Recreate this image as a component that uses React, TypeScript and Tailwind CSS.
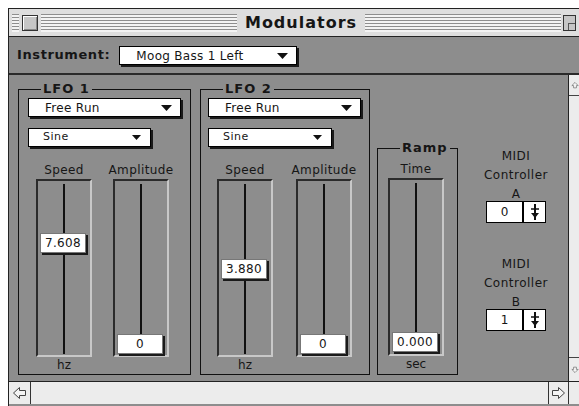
import React from "react";

const Tri = ({ small }: { small?: boolean }) =>
  small ? (
    <svg width="9" height="5" viewBox="0 0 9 5">
      <polygon points="0,0 9,0 4.5,5" fill="#111" />
    </svg>
  ) : (
    <svg width="11" height="6" viewBox="0 0 11 6">
      <polygon points="0,0 11,0 5.5,6" fill="#111" />
    </svg>
  );

const Popup = ({
  label,
  small,
  className,
}: {
  label: string;
  small?: boolean;
  className: string;
}) => (
  <div
    className={`flex items-center justify-between bg-white border border-black shadow-[2px_2px_0_#1a1a1a] ${className}`}
  >
    <span
      className={
        small
          ? "pl-[14px] text-[11px] tracking-[0.5px]"
          : "pl-[16px] text-[12px] tracking-[0.3px]"
      }
    >
      {label}
    </span>
    <span className={small ? "pr-[9px] flex" : "pr-[8px] flex"}>
      <Tri small={small} />
    </span>
  </div>
);

const Slider = ({ value, thumb }: { value: string; thumb: string }) => (
  <div className="relative h-[178px] w-[56px] border-2 border-t-[#2b2b2b] border-l-[#2b2b2b] border-b-[#c8c8c8] border-r-[#c8c8c8]">
    <div className="absolute left-[25px] top-[3px] bottom-[1px] w-[2px] bg-[#111]" />
    <div
      className={`absolute left-[2px] right-[4px] h-[20px] bg-white border border-[#777] shadow-[2px_2px_0_#1a1a1a] flex items-center justify-center text-[12px] tracking-[0.3px] ${thumb}`}
    >
      {value}
    </div>
  </div>
);

const SliderCol = ({
  label,
  unit,
  value,
  thumb,
}: {
  label: string;
  unit: string;
  value: string;
  thumb: string;
}) => (
  <div className="flex flex-col items-center w-[56px]">
    <div className="h-[17px] leading-[17px] text-[12px] tracking-[0.4px] whitespace-nowrap">
      {label}
    </div>
    <Slider value={value} thumb={thumb} />
    <div className="h-[16px] leading-[16px] text-[12px]">{unit}</div>
  </div>
);

const Group = ({
  title,
  className,
  children,
}: {
  title: string;
  className: string;
  children: React.ReactNode;
}) => (
  <div className={`relative border border-[#111] ${className}`}>
    <div className="absolute -top-[9px] left-[22px] px-[2px] bg-[#8d8d8d] text-[13px] font-bold leading-[16px] tracking-[1px]">
      {title}
    </div>
    {children}
  </div>
);

const StepIcon = () => (
  <svg width="12" height="18" viewBox="0 0 12 18">
    <line x1="6" y1="1" x2="6" y2="17" stroke="#111" strokeWidth="2" />
    <line x1="2" y1="6" x2="10" y2="6" stroke="#111" strokeWidth="1.5" />
    <polygon points="2,10 10,10 6,15" fill="#111" />
  </svg>
);

const Midi = ({
  letter,
  value,
  className,
}: {
  letter: string;
  value: string;
  className: string;
}) => (
  <div className={`flex flex-col items-center w-[60px] ${className}`}>
    <div className="h-[54px] text-center text-[12px] leading-[19px] tracking-[0.5px] whitespace-nowrap">
      MIDI
      <br />
      Controller
      <br />
      {letter}
    </div>
    <div className="flex h-[22px] w-[60px] border border-black bg-white">
      <div className="flex-1 flex items-center justify-center text-[12px]">
        {value}
      </div>
      <div className="w-[23px] border-l-2 border-black flex items-center justify-center">
        <StepIcon />
      </div>
    </div>
  </div>
);

const ArrowLeft = () => (
  <svg width="15" height="14" viewBox="0 0 15 14">
    <polygon
      points="1.5,7 7.5,1.5 7.5,4.5 13.5,4.5 13.5,9.5 7.5,9.5 7.5,12.5"
      fill="#f4f4f4"
      stroke="#444"
      strokeWidth="1"
    />
  </svg>
);

const ArrowRight = () => (
  <svg width="15" height="14" viewBox="0 0 15 14">
    <polygon
      points="13.5,7 7.5,1.5 7.5,4.5 1.5,4.5 1.5,9.5 7.5,9.5 7.5,12.5"
      fill="#f4f4f4"
      stroke="#444"
      strokeWidth="1"
    />
  </svg>
);

const Stripes = ({ className }: { className: string }) => (
  <div
    className={`h-[18px] bg-[image:repeating-linear-gradient(#8e8e8e_0px,#8e8e8e_1px,#f3f3f3_1px,#f3f3f3_3px)] ${className}`}
  />
);

export default function App() {
  return (
    <div className="w-[579px] h-[406px] overflow-hidden bg-white pl-[8px] pt-[8px] font-['DejaVu_Sans',sans-serif] text-[#161616]">
      <div className="w-[571px] h-[400px] flex flex-col border-l border-t border-[#222] bg-[#8d8d8d]">
        {/* title bar */}
        <div className="h-[28px] flex items-center bg-[#dedede] border-b border-[#222] pl-[3px]">
          <Stripes className="w-[7px]" />
          <div className="ml-[3px] mr-[3px] w-[16px] h-[16px] border border-[#333] bg-[#c6c6c6] shadow-[inset_1px_1px_0_#fff,inset_-1px_-1px_0_#888]" />
          <Stripes className="flex-1" />
          <div className="px-[8px] text-[16px] font-bold tracking-[1px] leading-[20px]">
            Modulators
          </div>
          <Stripes className="flex-1" />
          <div className="ml-[2px] w-[13px] h-[16px] border border-[#333] bg-[#c6c6c6] flex items-end justify-end">
            <div className="w-[7px] h-[7px] border-l border-t border-[#555]" />
          </div>
          <div className="w-[3px]" />
        </div>

        {/* toolbar */}
        <div className="h-[38px] flex items-center pl-[8px] border-b-2 border-[#2a2a2a]">
          <span className="text-[13px] font-bold tracking-[0.6px]">
            Instrument:
          </span>
          <Popup
            label="Moog Bass 1 Left"
            className="ml-[9px] mt-[1px] w-[178px] h-[19px]"
          />
        </div>

        {/* content */}
        <div className="h-[307px] flex border-b border-[#222]">
          <div className="flex-1 flex items-start pl-[9px]">
            <Group
              title="LFO 1"
              className="mt-[14px] w-[173px] h-[286px] flex flex-col pl-[9px] pt-[8px]"
            >
              <Popup label="Free Run" className="w-[153px] h-[19px]" />
              <Popup label="Sine" small className="mt-[11px] w-[123px] h-[19px]" />
              <div className="mt-auto mb-[1px] flex pl-[8px] gap-[21px]">
                <SliderCol label="Speed" unit="hz" value="7.608" thumb="top-[52px]" />
                <SliderCol label="Amplitude" unit="" value="0" thumb="top-[153px]" />
              </div>
            </Group>

            <Group
              title="LFO 2"
              className="ml-[9px] mt-[14px] w-[170px] h-[286px] flex flex-col pl-[7px] pt-[8px]"
            >
              <Popup label="Free Run" className="w-[153px] h-[19px]" />
              <Popup label="Sine" small className="mt-[11px] w-[124px] h-[19px]" />
              <div className="mt-auto mb-[1px] flex pl-[9px] gap-[23px]">
                <SliderCol label="Speed" unit="hz" value="3.880" thumb="top-[78px]" />
                <SliderCol label="Amplitude" unit="" value="0" thumb="top-[153px]" />
              </div>
            </Group>

            <Group
              title="Ramp"
              className="ml-[7px] mt-[73px] w-[81px] h-[227px] flex flex-col justify-end pl-[10px] pb-[2px]"
            >
              <SliderCol label="Time" unit="sec" value="0.000" thumb="top-[152px]" />
            </Group>

            <div className="ml-[28px] mt-[72px] flex flex-col">
              <Midi letter="A" value="0" className="" />
              <Midi letter="B" value="1" className="mt-[32px]" />
            </div>
          </div>

          {/* vertical scrollbar */}
          <div className="w-[11px] flex flex-col border-l border-[#222] bg-[#ececec] overflow-hidden">
            <div className="h-[21px] border-b border-[#444] flex items-center pl-[2px]">
              <svg width="14" height="12" viewBox="0 0 14 12">
                <polygon
                  points="7,1.5 12.5,7 9.5,7 9.5,11 4.5,11 4.5,7 1.5,7"
                  fill="#f4f4f4"
                  stroke="#555"
                />
              </svg>
            </div>
            <div className="flex-1" />
            <div className="h-[24px] border-t border-[#444] flex items-center pl-[2px]">
              <svg width="14" height="12" viewBox="0 0 14 12">
                <polygon
                  points="7,10.5 12.5,5 9.5,5 9.5,1 4.5,1 4.5,5 1.5,5"
                  fill="#f4f4f4"
                  stroke="#555"
                />
              </svg>
            </div>
          </div>
        </div>

        {/* horizontal scrollbar */}
        <div className="h-[22px] flex bg-[#ececec]">
          <div className="w-[22px] border-r border-[#333] flex items-center justify-center">
            <ArrowLeft />
          </div>
          <div className="flex-1" />
          <div className="w-[20px] border-l border-[#333] flex items-center justify-center">
            <ArrowRight />
          </div>
          <div className="w-[11px] border-l border-[#333]" />
        </div>
      </div>
    </div>
  );
}
